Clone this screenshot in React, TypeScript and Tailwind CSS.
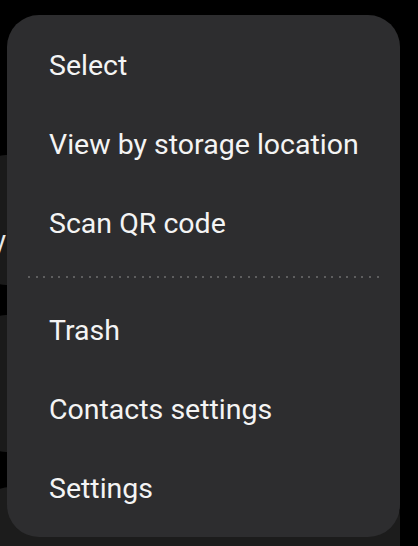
import React from "react";

const topItems = ["Select", "View by storage location", "Scan QR code"];
const bottomItems = ["Trash", "Contacts settings", "Settings"];

function MenuItem({ label }: { label: string }) {
  return (
    <div className="pl-[42px] text-[28.5px] leading-[79px] text-[#f4f4f4] whitespace-nowrap">
      {label}
    </div>
  );
}

function DottedLine() {
  // 47 little dots between the two groups
  return (
    <div className="flex h-[28px] items-center px-[21px]">
      <div className="flex w-full justify-between">
        {Array.from({ length: 47 }).map((_, i) => (
          <span key={i} className="h-[2px] w-[2px] rounded-full bg-[#6f6f71]" />
        ))}
      </div>
    </div>
  );
}

export default function App() {
  return (
    <div className="relative h-[546px] w-[418px] overflow-hidden bg-black font-['Roboto',sans-serif]">
      {/* list behind the popup */}
      <div className="flex flex-col gap-[30px] pt-[155px]">
        <div className="-ml-[20px] h-[130px] w-[420px] rounded-[26px] bg-[#1a1a1a] pt-[70px]">
          <div className="flex w-[26px] justify-end whitespace-nowrap text-[27px] leading-[32px] text-[#e8e8e8]">
            Sort by
          </div>
        </div>
        <div className="-ml-[20px] h-[137px] w-[420px] rounded-[26px] bg-[#1a1a1a]" />
        <div className="-ml-[20px] mt-[5px] h-[120px] w-[420px] rounded-[30px] bg-[#1c1c1c]" />
      </div>

      {/* popup menu */}
      <div className="absolute left-[7px] top-[15px] flex h-[522px] w-[393px] flex-col rounded-[32px] bg-[#2d2d2f] pt-[11px]">
        {topItems.map((t) => (
          <MenuItem key={t} label={t} />
        ))}
        <DottedLine />
        {bottomItems.map((t) => (
          <MenuItem key={t} label={t} />
        ))}
      </div>
    </div>
  );
}
